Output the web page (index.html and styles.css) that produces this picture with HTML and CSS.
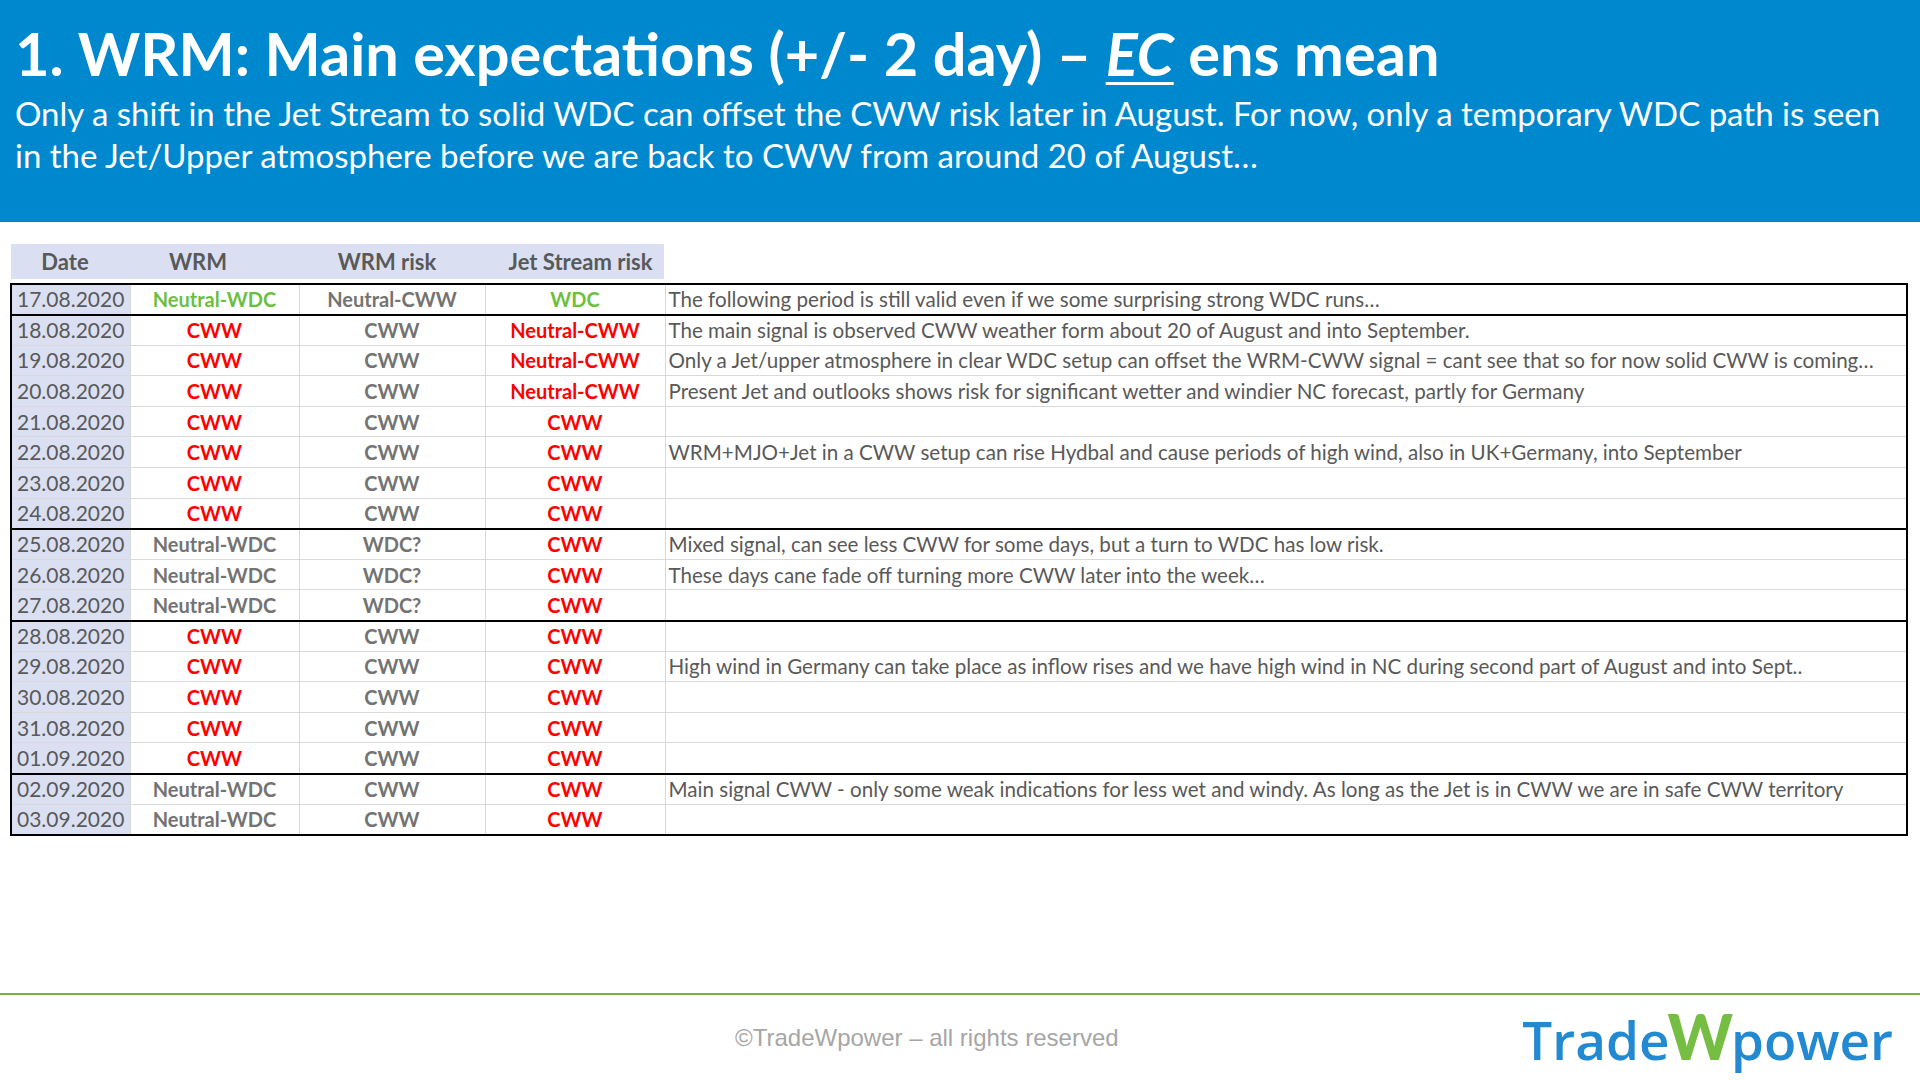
FILE: index.html
```html
<!DOCTYPE html>
<html lang="en">
<head>
<meta charset="utf-8">
<title>WRM: Main expectations</title>
<link rel="stylesheet" href="styles.css">
</head>
<body>
<div class="slide">
  <header class="banner">
    <h1 class="title">1. WRM: Main expectations (+/- 2 day) – <span class="ec">EC</span> ens mean</h1>
    <p class="subtitle">Only a shift in the Jet Stream to solid WDC can offset the CWW risk later in August. For now, only a temporary WDC path is seen<br>in the Jet/Upper atmosphere before we are back to CWW from around 20 of August…</p>
  </header>

  <main class="content">
    <div class="thead">
      <div class="th th-date">Date</div>
      <div class="th th-wrm">WRM</div>
      <div class="th th-risk">WRM risk</div>
      <div class="th th-jet">Jet Stream risk</div>
    </div>

    <table class="grid">
      <colgroup>
        <col class="c-date"><col class="c-wrm"><col class="c-risk"><col class="c-jet"><col>
      </colgroup>
      <tbody>
        <tr><td class="date">17.08.2020</td><td class="v green">Neutral-WDC</td><td class="v grey">Neutral-CWW</td><td class="v green">WDC</td><td class="note">The following period is still valid even if we some surprising strong WDC runs…</td></tr>
      </tbody>
      <tbody>
        <tr><td class="date">18.08.2020</td><td class="v red">CWW</td><td class="v grey">CWW</td><td class="v red">Neutral-CWW</td><td class="note">The main signal is observed CWW weather form about 20 of August and into September.</td></tr>
        <tr><td class="date">19.08.2020</td><td class="v red">CWW</td><td class="v grey">CWW</td><td class="v red">Neutral-CWW</td><td class="note">Only a Jet/upper atmosphere in clear WDC setup can offset the WRM-CWW signal = cant see that so for now solid CWW is coming…</td></tr>
        <tr><td class="date">20.08.2020</td><td class="v red">CWW</td><td class="v grey">CWW</td><td class="v red">Neutral-CWW</td><td class="note">Present Jet and outlooks shows risk for significant wetter and windier NC forecast, partly for Germany</td></tr>
        <tr><td class="date">21.08.2020</td><td class="v red">CWW</td><td class="v grey">CWW</td><td class="v red">CWW</td><td class="note"></td></tr>
        <tr><td class="date">22.08.2020</td><td class="v red">CWW</td><td class="v grey">CWW</td><td class="v red">CWW</td><td class="note">WRM+MJO+Jet in a CWW setup can rise Hydbal and cause periods of high wind, also in UK+Germany, into September</td></tr>
        <tr><td class="date">23.08.2020</td><td class="v red">CWW</td><td class="v grey">CWW</td><td class="v red">CWW</td><td class="note"></td></tr>
        <tr><td class="date">24.08.2020</td><td class="v red">CWW</td><td class="v grey">CWW</td><td class="v red">CWW</td><td class="note"></td></tr>
      </tbody>
      <tbody>
        <tr><td class="date">25.08.2020</td><td class="v grey">Neutral-WDC</td><td class="v grey">WDC?</td><td class="v red">CWW</td><td class="note">Mixed signal, can see less CWW for some days, but a turn to WDC has low risk.</td></tr>
        <tr><td class="date">26.08.2020</td><td class="v grey">Neutral-WDC</td><td class="v grey">WDC?</td><td class="v red">CWW</td><td class="note">These days cane fade off turning more CWW later into the week…</td></tr>
        <tr><td class="date">27.08.2020</td><td class="v grey">Neutral-WDC</td><td class="v grey">WDC?</td><td class="v red">CWW</td><td class="note"></td></tr>
      </tbody>
      <tbody>
        <tr><td class="date">28.08.2020</td><td class="v red">CWW</td><td class="v grey">CWW</td><td class="v red">CWW</td><td class="note"></td></tr>
        <tr><td class="date">29.08.2020</td><td class="v red">CWW</td><td class="v grey">CWW</td><td class="v red">CWW</td><td class="note">High wind in Germany can take place as inflow rises and we have high wind in NC during second part of August and into Sept..</td></tr>
        <tr><td class="date">30.08.2020</td><td class="v red">CWW</td><td class="v grey">CWW</td><td class="v red">CWW</td><td class="note"></td></tr>
        <tr><td class="date">31.08.2020</td><td class="v red">CWW</td><td class="v grey">CWW</td><td class="v red">CWW</td><td class="note"></td></tr>
        <tr><td class="date">01.09.2020</td><td class="v red">CWW</td><td class="v grey">CWW</td><td class="v red">CWW</td><td class="note"></td></tr>
      </tbody>
      <tbody>
        <tr><td class="date">02.09.2020</td><td class="v grey">Neutral-WDC</td><td class="v grey">CWW</td><td class="v red">CWW</td><td class="note">Main signal CWW - only some weak indications for less wet and windy. As long as the Jet is in CWW we are in safe CWW territory</td></tr>
        <tr><td class="date">03.09.2020</td><td class="v grey">Neutral-WDC</td><td class="v grey">CWW</td><td class="v red">CWW</td><td class="note"></td></tr>
      </tbody>
    </table>
  </main>

  <footer class="footer">
    <span class="copyright">©TradeWpower – all rights reserved</span>
    <div class="logo"><span class="logo-word">Trade</span><span class="logo-w">W</span><span class="logo-word">power</span></div>
  </footer>
</div>
</body>
</html>
```

FILE: styles.css
```css
html, body {
  margin: 0;
  padding: 0;
  background: #ffffff;
}

.slide {
  width: 1920px;
  height: 1080px;
  display: flex;
  flex-direction: column;
  font-family: "Lato", "Open Sans", sans-serif;
  overflow: hidden;
}

.banner {
  background: #0088cf;
  height: 222px;
  box-sizing: border-box;
  padding: 18px 0 0 15px;
  color: #ffffff;
}

.title {
  margin: 0;
  font-size: 59.5px;
  font-weight: 700;
  line-height: 70px;
  white-space: nowrap;
}

.ec {
  font-style: italic;
  text-decoration: underline;
  text-decoration-thickness: 3px;
  text-underline-offset: 6px;
}

.subtitle {
  margin: 4px 0 0 0;
  font-size: 33px;
  line-height: 42px;
  white-space: nowrap;
}

.content {
  flex: 1;
  padding-top: 22px;
}

.thead {
  display: flex;
  margin-left: 11px;
  width: 653px;
  height: 35px;
  background: #dae0f1;
}

.th {
  display: flex;
  align-items: center;
  justify-content: center;
  font-size: 22px;
  font-weight: 700;
  color: #595959;
}

.th-date { width: 108px; }
.th-wrm { width: 158px; }
.th-risk { width: 220px; }
.th-jet { width: 167px; }

.grid {
  margin: 4px 0 0 10px;
  width: 1898px;
  border-collapse: collapse;
  table-layout: fixed;
  border: 2px solid #000000;
  font-size: 20px;
}

.c-date { width: 119px; }
.c-wrm { width: 169px; }
.c-risk { width: 186px; }
.c-jet { width: 180px; }

.grid tbody {
  border-top: 2px solid #000000;
}

.grid tr {
  height: 30.6px;
}

.grid td {
  padding: 0;
  border: 1px solid #d9d9d9;
  white-space: nowrap;
  overflow: hidden;
  line-height: 24px;
}

.grid tbody tr:first-child td {
  border-top: 2px solid #000000;
}

.grid td.date {
  background: #dae0f1;
  color: #595959;
  padding-left: 5px;
  font-size: 21px;
}

.grid td.v {
  text-align: center;
  font-weight: 700;
}

.green { color: #6cbf3f; }
.red { color: #ff0000; }
.grey { color: #737373; }

.grid td.note {
  color: #595959;
  padding-left: 3px;
  font-size: 20.6px;
}

.footer {
  height: 85px;
  border-top: 2px solid #70b544;
  display: flex;
  align-items: center;
  padding-right: 27px;
}

.copyright {
  margin-left: 735px;
  font-family: "Liberation Sans", Arial, sans-serif;
  font-size: 24px;
  color: #a6a6a6;
}

.logo {
  margin-left: auto;
  display: flex;
  align-items: baseline;
  color: #2389d1;
  font-family: "Open Sans", "Lato", sans-serif;
  font-weight: 600;
  font-size: 53px;
  line-height: 60px;
}

.logo-w {
  color: #76be43;
  font-family: "Lato", sans-serif;
  font-weight: 900;
  font-size: 62px;
  margin: 0 -2px;
}
```
